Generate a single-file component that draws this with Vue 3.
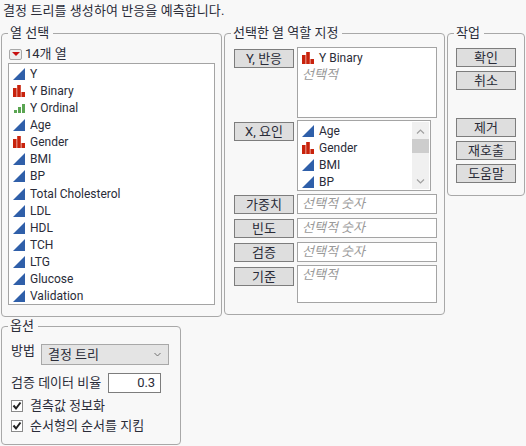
<script setup>
const columns = [
  ['Y', 'c'], ['Y Binary', 'n'], ['Y Ordinal', 'o'], ['Age', 'c'], ['Gender', 'n'],
  ['BMI', 'c'], ['BP', 'c'], ['Total Cholesterol', 'c'], ['LDL', 'c'], ['HDL', 'c'],
  ['TCH', 'c'], ['LTG', 'c'], ['Glucose', 'c'], ['Validation', 'c']
]
const factors = [['Age', 'c'], ['Gender', 'n'], ['BMI', 'c'], ['BP', 'c']]
const paths = {
  c: 'M0 12 12 0V12Z',
  n: 'M0 3H3.6V12H0ZM4.2 0H7.8V12H4.2ZM8.4 7H12V12H8.4Z',
  o: 'M1 8H4V11H1ZM5 5H8V11H5ZM9 2H12V11H9Z'
}
const rolesSmall = ['가중치', '빈도', '검증']
</script>

<template>
  <div class="dialog">
    <p class="intro">결정 트리를 생성하여 반응을 예측합니다.</p>

    <div class="panels">
      <fieldset class="panel columns">
        <legend>열 선택</legend>
        <div class="count">
          <span class="menu"><i></i></span>
          <span>14개 열</span>
        </div>
        <ul class="list">
          <li v-for="c in columns" :key="c[0]">
            <svg class="ic" :class="c[1]" viewBox="0 0 12 12"><path :d="paths[c[1]]" /></svg>
            {{ c[0] }}
          </li>
        </ul>
      </fieldset>

      <fieldset class="panel roles">
        <legend>선택한 열 역할 지정</legend>
        <div class="role role-y">
          <button class="btn">Y, 반응</button>
          <div class="box tall">
            <div class="item">
              <svg class="ic n" viewBox="0 0 12 12"><path :d="paths.n" /></svg>
              Y Binary
            </div>
            <div class="hint">선택적</div>
          </div>
        </div>
        <div class="role role-x">
          <button class="btn">X, 요인</button>
          <div class="box scroller">
            <div class="items">
              <div v-for="f in factors" :key="f[0]" class="item">
                <svg class="ic" :class="f[1]" viewBox="0 0 12 12"><path :d="paths[f[1]]" /></svg>
                {{ f[0] }}
              </div>
            </div>
            <div class="scrollbar">
              <svg class="arrow" viewBox="0 0 9 5"><path d="M1 4.5 4.5 1 8 4.5" /></svg>
              <div class="thumb"></div>
              <svg class="arrow down" viewBox="0 0 9 5"><path d="M1 .5 4.5 4 8 .5" /></svg>
            </div>
          </div>
        </div>
        <div v-for="r in rolesSmall" :key="r" class="role role-s">
          <button class="btn">{{ r }}</button>
          <div class="box single"><div class="hint">선택적 숫자</div></div>
        </div>
        <div class="role role-last">
          <button class="btn">기준</button>
          <div class="box last"><div class="hint">선택적</div></div>
        </div>
      </fieldset>

      <fieldset class="panel actions">
        <legend>작업</legend>
        <button class="btn">확인</button>
        <button class="btn">취소</button>
        <button class="btn spaced">제거</button>
        <button class="btn">재호출</button>
        <button class="btn">도움말</button>
      </fieldset>
    </div>

    <fieldset class="panel options">
      <legend>옵션</legend>
      <div class="opt-method">
        <span class="method-label">방법</span>
        <div class="select">
          <span>결정 트리</span>
          <svg class="chev" viewBox="0 0 7 5"><path d="M.5 1 3.5 4 6.5 1" /></svg>
        </div>
      </div>
      <div class="opt-ratio">
        <span>검증 데이터 비율</span>
        <div class="num">0.3</div>
      </div>
      <label class="check">
        <span class="tick"><svg viewBox="0 0 10 10"><path d="M1.5 4.5 4 7.5 8.5 1.5" /></svg></span>
        결측값 정보화
      </label>
      <label class="check">
        <span class="tick"><svg viewBox="0 0 10 10"><path d="M1.5 4.5 4 7.5 8.5 1.5" /></svg></span>
        순서형의 순서를 지킴
      </label>
    </fieldset>
  </div>
</template>

<style scoped>
.dialog {
  width: 526px;
  height: 446px;
  box-sizing: border-box;
  overflow: hidden;
  background: #f8f8f8;
  color: #2a2c38;
  font: 13px/16px Roboto, "Noto Sans CJK KR", sans-serif;
}
.intro {
  margin: 0;
  padding: 3px 0 0 3px;
  height: 25px;
  box-sizing: border-box;
  letter-spacing: 0.08px;
}
.panels {
  display: flex;
  align-items: flex-start;
  gap: 2px;
  padding-left: 1px;
}
.panel {
  margin: 0;
  min-width: 0;
  box-sizing: border-box;
  border: 1px solid #a8a8a8;
  border-radius: 4px;
}
.panel legend {
  padding: 0 4px 0 2px;
  line-height: 16px;
  height: 16px;
}
.columns {
  width: 221px;
  height: 292px;
  padding: 0 6px;
}
.count {
  display: flex;
  align-items: center;
  height: 16px;
  gap: 3px;
  padding-left: 1px;
  margin: 5px 0 1px;
}
.menu {
  width: 13px;
  height: 11px;
  box-sizing: border-box;
  border: 1px solid #a8a8a8;
  border-radius: 2px;
  background: #eee;
  display: flex;
  align-items: center;
  justify-content: center;
}
.menu i {
  width: 0;
  height: 0;
  border: 4px solid transparent;
  border-top: 4px solid #c81010;
  border-bottom: 0;
}
.list {
  list-style: none;
  margin: 0;
  padding: 1px 0 0 4px;
  width: 207px;
  height: 242px;
  box-sizing: border-box;
  background: #fff;
  border: 1px solid #a4a4a4;
}
.list li, .item {
  display: flex;
  align-items: center;
  gap: 5px;
  font-size: 12px;
}
.list li { height: 17.15px; }
.item { height: 17px; }
.ic {
  width: 12px;
  height: 12px;
  flex: none;
}
.ic.c { fill: #2f5fa9; }
.ic.n { fill: #c8220c; }
.ic.o { fill: #5aa552; }
.roles {
  width: 221px;
  height: 290px;
  padding: 0 7px 0 9px;
}
.roles legend { margin-left: -3px; }
.actions legend { margin-left: -2px; }
.options legend { margin-left: -3px; }
.role {
  display: flex;
  align-items: flex-start;
  gap: 3px;
}
.btn {
  width: 60px;
  height: 19px;
  padding: 0;
  flex: none;
  box-sizing: border-box;
  background: #dedede;
  border: 1px solid #7d7d7d;
  color: #2a2c38;
  font: inherit;
  line-height: 16px;
}
.box {
  box-sizing: border-box;
  width: 140px;
  background: #fff;
  border: 1px solid #a4a4a4;
  padding: 1px 4px;
}
.role-y { padding-top: 6px; }
.role-y .btn { margin-top: 2px; }
.tall { height: 71px; }
.role-x { margin-top: 2px; }
.role-x .btn { margin-top: 2px; }
.scroller {
  width: 134px;
  height: 71px;
  display: flex;
  justify-content: space-between;
  padding: 1px 1px 1px 4px;
}
.items { flex: 1; }
.hint {
  color: #9a9a9a;
  font-style: italic;
  height: 17px;
  line-height: 17px;
}
.scrollbar {
  width: 17px;
  background: #f0f0f0;
  display: flex;
  flex-direction: column;
  align-items: center;
  padding-top: 7px;
}
.arrow {
  width: 9px;
  height: 5px;
  flex: none;
  fill: none;
  stroke: #a0a0a0;
  stroke-width: 1.2;
}
.arrow.down { margin-top: auto; margin-bottom: 5px; }
.thumb {
  width: 17px;
  height: 14px;
  margin-top: 5px;
  background: #cdcdcd;
}
.role-s { margin-top: 4px; height: 20px; }
.role-x + .role-s { margin-top: 3px; }
.role-s .btn { margin-top: 1px; }
.single { height: 20px; padding-top: 0; }
.role-last { margin-top: 3px; }
.role-last .btn { margin-top: 2px; }
.last { height: 38px; padding-top: 0; }
.actions {
  width: 78px;
  height: 171px;
  padding: 0 0 0 8px;
  display: flex;
  flex-direction: column;
  gap: 4px;
}
.actions .btn:first-of-type { margin-top: 7px; }
.spaced { margin-top: 24px; }
.options {
  width: 180px;
  height: 127px;
  margin: 1px 0 0 1px;
  padding: 0 0 0 9px;
}
.opt-method {
  display: flex;
  align-items: center;
  gap: 6px;
  height: 21px;
  margin-top: 10px;
}
.method-label { margin-bottom: 8px; }
.select {
  width: 128px;
  height: 21px;
  box-sizing: border-box;
  background: #e4e4e4;
  border: 1px solid #a8a8a8;
  padding: 0 7px 0 6px;
  display: flex;
  align-items: center;
  justify-content: space-between;
}
.chev {
  width: 7px;
  height: 5px;
  fill: none;
  stroke: #707070;
}
.opt-ratio {
  display: flex;
  align-items: center;
  gap: 7px;
  height: 20px;
  margin-top: 8px;
}
.num {
  width: 53px;
  height: 20px;
  box-sizing: border-box;
  background: #fff;
  border: 1px solid #7d7d7d;
  padding: 1px 5px 0 0;
  text-align: right;
}
.check {
  display: flex;
  align-items: center;
  gap: 7px;
  height: 12px;
  margin-top: 7px;
}
.check + .check { margin-top: 8px; }
.tick {
  width: 12px;
  height: 12px;
  box-sizing: border-box;
  background: #fff;
  border: 1px solid #8a8a8a;
  display: flex;
}
.tick svg {
  fill: none;
  stroke: #222;
  stroke-width: 2;
}
</style>
